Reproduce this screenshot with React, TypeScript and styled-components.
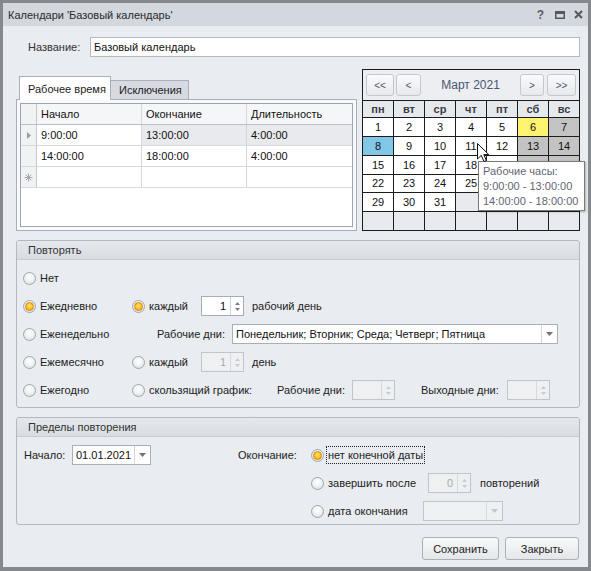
import React from "react";
import styled, { createGlobalStyle, css } from "styled-components";

const GlobalStyle = createGlobalStyle`
  html, body {
    margin: 0;
    padding: 0;
    background: #ffffff;
  }
  body {
    font-family: "Liberation Sans", Arial, sans-serif;
    font-size: 11px;
    color: #1e1e1e;
  }
  * {
    box-sizing: border-box;
  }
`;

const Window = styled.div`
  width: 591px;
  height: 571px;
  border: 3px solid #85888d;
  border-bottom-width: 4px;
  background: #e9ecf0;
  display: flex;
  flex-direction: column;
`;

const TitleBar = styled.div`
  height: 23px;
  flex: none;
  background: #d3d7de;
  display: flex;
  align-items: center;
  justify-content: space-between;
  padding-left: 5px;
  color: #2a2a2a;
`;

const TitleButtons = styled.div`
  display: flex;
  align-items: center;
`;

const TitleButton = styled.div`
  width: 19px;
  height: 23px;
  display: flex;
  align-items: center;
  justify-content: center;
  color: #5b5e63;
  font-weight: bold;
  font-size: 12px;
`;

const Body = styled.div`
  flex: 1;
  display: flex;
  flex-direction: column;
  padding: 11px 8px 0 13px;
`;

const NameRow = styled.div`
  display: flex;
  align-items: center;
  height: 20px;
`;

const NameLabel = styled.div`
  width: 74px;
  flex: none;
  padding-left: 12px;
  color: #333;
  white-space: nowrap;
`;

const TextInput = styled.div`
  flex: 1;
  height: 20px;
  line-height: 18px;
  background: #fff;
  border: 1px solid #b4bac3;
  padding-left: 3px;
  color: #111;
`;

const TopSection = styled.div`
  position: relative;
  margin-top: 12px;
  height: 162px;
  display: flex;
  gap: 5px;
`;

const TabArea = styled.div`
  width: 341px;
  display: flex;
  flex-direction: column;
  padding-top: 8px;
`;

const TabStrip = styled.div`
  display: flex;
  align-items: flex-end;
  height: 22px;
  padding-left: 3px;
`;

const Tab = styled.div<{ $active?: boolean; $width: number }>`
  width: ${({ $width }) => $width}px;
  border: 1px solid #aab0b9;
  padding-left: 8px;
  display: flex;
  align-items: center;
  color: #222;
  ${({ $active }) =>
    $active
      ? css`
          height: 24px;
          margin-bottom: -1px;
          background: #ffffff;
          border-bottom: none;
          position: relative;
          z-index: 1;
        `
      : css`
          height: 19px;
          background: #d7dbe1;
          border-left: none;
          border-bottom: none;
        `}
`;

const TabPage = styled.div`
  flex: 1;
  border: 1px solid #a9afb8;
  background: #f8f9fa;
  padding: 3px;
  display: flex;
`;

const Grid = styled.div`
  flex: 1;
  border: 1px solid #9ea5ae;
  background: #fff;
  display: flex;
  flex-direction: column;
`;

const GridRow = styled.div<{ $header?: boolean }>`
  display: grid;
  grid-template-columns: 16px 105px 105px 1fr;
  height: 21px;
  border-bottom: 1px solid ${({ $header }) => ($header ? "#b9bfc7" : "#d6dade")};
  background: ${({ $header }) => ($header ? "#f5f6f8" : "#ffffff")};
`;

const GridCell = styled.div<{ $selected?: boolean; $indicator?: boolean }>`
  border-right: 1px solid #d3d7dc;
  padding-left: 4px;
  display: flex;
  align-items: center;
  color: #111;
  background: ${({ $selected }) => ($selected ? "#e8eaed" : "transparent")};
  ${({ $indicator }) =>
    $indicator &&
    css`
      padding-left: 0;
      justify-content: center;
      background: #f1f2f4;
      border-right-color: #c3c8cf;
    `}
  &:last-child {
    border-right: none;
  }
`;

const Calendar = styled.div`
  width: 218px;
  height: 162px;
  border: 1px solid #1c1c1c;
  display: flex;
  flex-direction: column;
  background: #eceef1;
`;

const CalHeader = styled.div`
  height: 30px;
  display: flex;
  align-items: center;
  padding: 0 3px;
`;

const NavButton = styled.div<{ $width: number; $gap?: number }>`
  width: ${({ $width }) => $width}px;
  height: 22px;
  margin-left: ${({ $gap }) => $gap ?? 0}px;
  border: 1px solid #c4c8ce;
  border-radius: 3px;
  background: linear-gradient(#fafbfc, #e7e9ec);
  display: flex;
  align-items: center;
  justify-content: center;
  color: #4b5670;
  font-size: 10px;
`;

const MonthTitle = styled.div`
  flex: 1;
  text-align: center;
  color: #4a5672;
  font-size: 12px;
`;

const CalGrid = styled.div`
  flex: 1;
  display: grid;
  grid-template-columns: repeat(7, 30px);
  grid-template-rows: 16px repeat(6, 1fr);
  gap: 1px;
  background: #1c1c1c;
  border-top: 1px solid #1c1c1c;
`;

type DayKind = "name" | "day" | "today" | "off" | "sel" | "empty";

const dayColors: Record<DayKind, string> = {
  name: "#e5e8ec",
  day: "#ffffff",
  today: "#fef36f",
  off: "#c3c3c3",
  sel: "#82c7e8",
  empty: "#e8eaee",
};

const DayCell = styled.div<{ $kind: DayKind }>`
  background: ${({ $kind }) => dayColors[$kind]};
  display: flex;
  align-items: center;
  justify-content: center;
  color: #111;
  ${({ $kind }) =>
    $kind === "name" &&
    css`
      font-weight: bold;
      color: #3b3d42;
    `}
`;

const Tooltip = styled.div`
  position: absolute;
  left: 462px;
  top: 92px;
  width: 107px;
  height: 50px;
  background: #fff;
  border: 1px solid #7a7a7a;
  box-shadow: 1px 1px 2px rgba(0, 0, 0, 0.25);
  padding: 2px 0 0 4px;
  color: #5f6674;
  line-height: 15px;
  z-index: 3;
`;

const Cursor = styled.svg`
  position: absolute;
  left: 461px;
  top: 74px;
  z-index: 4;
`;

const Group = styled.div<{ $height: number; $gap: number }>`
  margin-top: ${({ $gap }) => $gap}px;
  height: ${({ $height }) => $height}px;
  border: 1px solid #b3b9c1;
  border-radius: 3px;
  display: flex;
  flex-direction: column;
  overflow: hidden;
`;

const GroupHeader = styled.div`
  height: 19px;
  flex: none;
  background: linear-gradient(#e4e7eb, #d9dde2);
  border-bottom: 1px solid #c8cdd3;
  padding-left: 11px;
  display: flex;
  align-items: center;
  color: #333;
`;

const RepeatBody = styled.div`
  padding: 4px 0 0 6px;
  display: flex;
  flex-direction: column;
`;

const OptionRow = styled.div`
  height: 28px;
  display: flex;
  align-items: center;
`;

const Cell = styled.div<{ $width?: number; $pad?: number }>`
  ${({ $width }) => $width !== undefined && css`width: ${$width}px;`}
  padding-left: ${({ $pad }) => $pad ?? 0}px;
  display: flex;
  align-items: center;
  flex: none;
  color: #222;
  white-space: nowrap;
`;

const RadioLabel = styled.label`
  display: flex;
  align-items: center;
  color: #222;
`;

const RadioCircle = styled.span<{ $checked?: boolean }>`
  width: 13px;
  height: 13px;
  border-radius: 50%;
  border: 1px solid #a1a6ac;
  background: radial-gradient(circle at 50% 35%, #ffffff 0%, #f1f2f4 45%, #d6d9dd 100%);
  margin-right: 4px;
  display: flex;
  align-items: center;
  justify-content: center;
  flex: none;
  &::after {
    content: "";
    display: ${({ $checked }) => ($checked ? "block" : "none")};
    width: 7px;
    height: 7px;
    border-radius: 50%;
    border: 1px solid #d68a00;
    background: radial-gradient(circle at 50% 40%, #ffe27a 0%, #fbbd1c 60%, #f0a000 100%);
  }
`;

const FocusText = styled.span`
  border: 1px dotted #222;
  padding: 2px 1px 2px 1px;
  margin-left: -2px;
`;

const SpinBox = styled.div<{ $disabled?: boolean; $width: number }>`
  width: ${({ $width }) => $width}px;
  height: 20px;
  display: flex;
  flex: none;
  border: 1px solid ${({ $disabled }) => ($disabled ? "#c0c5cb" : "#a6acb4")};
  background: ${({ $disabled }) => ($disabled ? "#eef0f2" : "#ffffff")};
  color: ${({ $disabled }) => ($disabled ? "#a9a9a9" : "#111")};
`;

const SpinValue = styled.div`
  flex: 1;
  text-align: right;
  padding-right: 4px;
  line-height: 18px;
`;

const SpinButtons = styled.div<{ $disabled?: boolean }>`
  width: 13px;
  border-left: 1px solid ${({ $disabled }) => ($disabled ? "#d6d9dd" : "#d0d4d9")};
  display: flex;
  flex-direction: column;
  align-items: center;
  justify-content: center;
  gap: 3px;
`;

const Combo = styled.div<{ $disabled?: boolean; $width: number }>`
  width: ${({ $width }) => $width}px;
  height: 20px;
  display: flex;
  flex: none;
  border: 1px solid ${({ $disabled }) => ($disabled ? "#c0c5cb" : "#a9afb7")};
  background: ${({ $disabled }) => ($disabled ? "#eef0f2" : "#ffffff")};
`;

const ComboText = styled.div`
  flex: 1;
  padding-left: 3px;
  line-height: 18px;
  color: #111;
  white-space: nowrap;
  overflow: hidden;
`;

const ComboButton = styled.div<{ $disabled?: boolean }>`
  width: 16px;
  border-left: 1px solid ${({ $disabled }) => ($disabled ? "#d8dbdf" : "#d3d7dc")};
  display: flex;
  align-items: center;
  justify-content: center;
`;

const LimitsBody = styled.div`
  padding: 8px 0 0 7px;
  display: flex;
  align-items: flex-start;
`;

const EndColumn = styled.div`
  display: flex;
  flex-direction: column;
  gap: 8px;
`;

const EndRow = styled.div`
  height: 20px;
  display: flex;
  align-items: center;
`;

const ButtonRow = styled.div`
  margin-top: 12px;
  display: flex;
  justify-content: flex-end;
  gap: 6px;
  padding-right: 1px;
`;

const DialogButton = styled.div<{ $width: number }>`
  width: ${({ $width }) => $width}px;
  height: 23px;
  border: 1px solid #abb0b7;
  border-radius: 3px;
  background: linear-gradient(#f8f9fa, #e4e6e9);
  display: flex;
  align-items: center;
  justify-content: center;
  color: #222;
`;

function Tri({ dir, color }: { dir: "up" | "down"; color: string }) {
  return (
    <svg width="5" height="3" viewBox="0 0 5 3">
      <path d={dir === "up" ? "M0 3 L2.5 0 L5 3 Z" : "M0 0 L2.5 3 L5 0 Z"} fill={color} />
    </svg>
  );
}

function Spin({ value, disabled, width = 43 }: { value?: string; disabled?: boolean; width?: number }) {
  const c = disabled ? "#c8cbcf" : "#7a7e84";
  return (
    <SpinBox $disabled={disabled} $width={width}>
      <SpinValue>{value}</SpinValue>
      <SpinButtons $disabled={disabled}>
        <Tri dir="up" color={c} />
        <Tri dir="down" color={c} />
      </SpinButtons>
    </SpinBox>
  );
}

function Dropdown({ text, disabled, width }: { text?: string; disabled?: boolean; width: number }) {
  return (
    <Combo $disabled={disabled} $width={width}>
      <ComboText>{text}</ComboText>
      <ComboButton $disabled={disabled}>
        <svg width="7" height="4" viewBox="0 0 7 4">
          <path d="M0 0 L3.5 4 L7 0 Z" fill={disabled ? "#c3c6ca" : "#6f7378"} />
        </svg>
      </ComboButton>
    </Combo>
  );
}

function Radio({ checked, children }: { checked?: boolean; children: React.ReactNode }) {
  return (
    <RadioLabel>
      <RadioCircle $checked={checked} />
      {children}
    </RadioLabel>
  );
}

const dayNames = ["пн", "вт", "ср", "чт", "пт", "сб", "вс"];

// cells that sit under the tooltip in the picture are drawn without numbers
const hiddenByTooltip = new Set([19, 20, 21, 26, 27, 28]);

function buildDays(): { label: string; kind: DayKind }[] {
  const cells: { label: string; kind: DayKind }[] = [];
  for (let i = 0; i < 42; i++) {
    const d = i + 1;
    const col = i % 7;
    if (d > 31) {
      cells.push({ label: "", kind: "empty" });
      continue;
    }
    let kind: DayKind = "day";
    if (d === 6) kind = "today";
    else if (d === 8) kind = "sel";
    else if (col >= 5) kind = "off";
    cells.push({ label: hiddenByTooltip.has(d) ? "" : String(d), kind });
  }
  return cells;
}

const rows = [
  { start: "9:00:00", end: "13:00:00", len: "4:00:00", selected: true },
  { start: "14:00:00", end: "18:00:00", len: "4:00:00", selected: false },
];

export default function App() {
  const days = buildDays();
  return (
    <>
      <GlobalStyle />
      <Window>
        <TitleBar>
          <span>Календари 'Базовый календарь'</span>
          <TitleButtons>
            <TitleButton>?</TitleButton>
            <TitleButton>
              <svg width="10" height="8" viewBox="0 0 10 8">
                <rect x="0.75" y="0.75" width="8.5" height="6.5" fill="none" stroke="#55585d" strokeWidth="1.5" />
                <rect x="0" y="0" width="10" height="3" fill="#55585d" />
              </svg>
            </TitleButton>
            <TitleButton>
              <svg width="9" height="9" viewBox="0 0 9 9">
                <path d="M1 1 L8 8 M8 1 L1 8" stroke="#55585d" strokeWidth="2" />
              </svg>
            </TitleButton>
          </TitleButtons>
        </TitleBar>

        <Body>
          <NameRow>
            <NameLabel>Название:</NameLabel>
            <TextInput>Базовый календарь</TextInput>
          </NameRow>

          <TopSection>
            <TabArea>
              <TabStrip>
                <Tab $active $width={92}>Рабочее время</Tab>
                <Tab $width={78}>Исключения</Tab>
              </TabStrip>
              <TabPage>
                <Grid>
                  <GridRow $header>
                    <GridCell $indicator />
                    <GridCell>Начало</GridCell>
                    <GridCell>Окончание</GridCell>
                    <GridCell>Длительность</GridCell>
                  </GridRow>
                  {rows.map((r, i) => (
                    <GridRow key={i}>
                      <GridCell $indicator>
                        {r.selected && (
                          <svg width="4" height="7" viewBox="0 0 4 7">
                            <path d="M0 0 L4 3.5 L0 7 Z" fill="#9a9ea4" />
                          </svg>
                        )}
                      </GridCell>
                      <GridCell>{r.start}</GridCell>
                      <GridCell $selected={r.selected}>{r.end}</GridCell>
                      <GridCell $selected={r.selected}>{r.len}</GridCell>
                    </GridRow>
                  ))}
                  <GridRow>
                    <GridCell $indicator>
                      <svg width="9" height="9" viewBox="0 0 9 9">
                        <path
                          d="M4.5 0.5 V8.5 M0.5 4.5 H8.5 M1.7 1.7 L7.3 7.3 M7.3 1.7 L1.7 7.3"
                          stroke="#a6aab0"
                          strokeWidth="1"
                        />
                      </svg>
                    </GridCell>
                    <GridCell />
                    <GridCell />
                    <GridCell />
                  </GridRow>
                </Grid>
              </TabPage>
            </TabArea>

            <Calendar>
              <CalHeader>
                <NavButton $width={28}>&lt;&lt;</NavButton>
                <NavButton $width={25} $gap={2}>&lt;</NavButton>
                <MonthTitle>Март 2021</MonthTitle>
                <NavButton $width={24}>&gt;</NavButton>
                <NavButton $width={29} $gap={3}>&gt;&gt;</NavButton>
              </CalHeader>
              <CalGrid>
                {dayNames.map((n) => (
                  <DayCell key={n} $kind="name">{n}</DayCell>
                ))}
                {days.map((d, i) => (
                  <DayCell key={i} $kind={d.kind}>{d.label}</DayCell>
                ))}
              </CalGrid>
            </Calendar>

            <Cursor width="13" height="20" viewBox="0 0 13 20">
              <path
                d="M0.5 0.5 L0.5 16 L4.3 12.4 L7 18.6 L9.4 17.6 L6.8 11.6 L11.8 11.6 Z"
                fill="#ffffff"
                stroke="#111"
                strokeWidth="1"
                strokeLinejoin="round"
              />
            </Cursor>
            <Tooltip>
              <div>Рабочие часы:</div>
              <div>9:00:00 - 13:00:00</div>
              <div>14:00:00 - 18:00:00</div>
            </Tooltip>
          </TopSection>

          <Group $height={168} $gap={9}>
            <GroupHeader>Повторять</GroupHeader>
            <RepeatBody>
              <OptionRow>
                <Cell $width={109}>
                  <Radio>Нет</Radio>
                </Cell>
              </OptionRow>
              <OptionRow>
                <Cell $width={109}>
                  <Radio checked>Ежедневно</Radio>
                </Cell>
                <Cell $width={69}>
                  <Radio checked>каждый</Radio>
                </Cell>
                <Spin value="1" />
                <Cell $pad={8}>рабочий день</Cell>
              </OptionRow>
              <OptionRow>
                <Cell $width={109}>
                  <Radio>Еженедельно</Radio>
                </Cell>
                <Cell $width={100} $pad={25}>Рабочие дни:</Cell>
                <Dropdown width={326} text="Понедельник; Вторник; Среда; Четверг; Пятница" />
              </OptionRow>
              <OptionRow>
                <Cell $width={109}>
                  <Radio>Ежемесячно</Radio>
                </Cell>
                <Cell $width={69}>
                  <Radio>каждый</Radio>
                </Cell>
                <Spin value="1" disabled />
                <Cell $pad={8}>день</Cell>
              </OptionRow>
              <OptionRow>
                <Cell $width={109}>
                  <Radio>Ежегодно</Radio>
                </Cell>
                <Cell $width={145}>
                  <Radio>скользящий график:</Radio>
                </Cell>
                <Cell $width={75}>Рабочие дни:</Cell>
                <Spin disabled />
                <Cell $width={112} $pad={26}>Выходные дни:</Cell>
                <Spin disabled />
              </OptionRow>
            </RepeatBody>
          </Group>

          <Group $height={108} $gap={9}>
            <GroupHeader>Пределы повторения</GroupHeader>
            <LimitsBody>
              <EndRow>
                <Cell $width={48}>Начало:</Cell>
                <Combo $width={79}>
                  <ComboText>01.01.2021</ComboText>
                  <ComboButton>
                    <svg width="7" height="4" viewBox="0 0 7 4">
                      <path d="M0 0 L3.5 4 L7 0 Z" fill="#6f7378" />
                    </svg>
                  </ComboButton>
                </Combo>
                <Cell $width={87} />
                <Cell $width={73}>Окончание:</Cell>
              </EndRow>
              <EndColumn>
                <EndRow>
                  <Radio checked>
                    <FocusText>нет конечной даты</FocusText>
                  </Radio>
                </EndRow>
                <EndRow>
                  <Radio>
                    <Cell $width={100}>завершить после</Cell>
                  </Radio>
                  <Spin value="0" disabled />
                  <Cell $pad={9}>повторений</Cell>
                </EndRow>
                <EndRow>
                  <Radio>
                    <Cell $width={95}>дата окончания</Cell>
                  </Radio>
                  <Dropdown width={80} disabled />
                </EndRow>
              </EndColumn>
            </LimitsBody>
          </Group>

          <ButtonRow>
            <DialogButton $width={77}>Сохранить</DialogButton>
            <DialogButton $width={74}>Закрыть</DialogButton>
          </ButtonRow>
        </Body>
      </Window>
    </>
  );
}
